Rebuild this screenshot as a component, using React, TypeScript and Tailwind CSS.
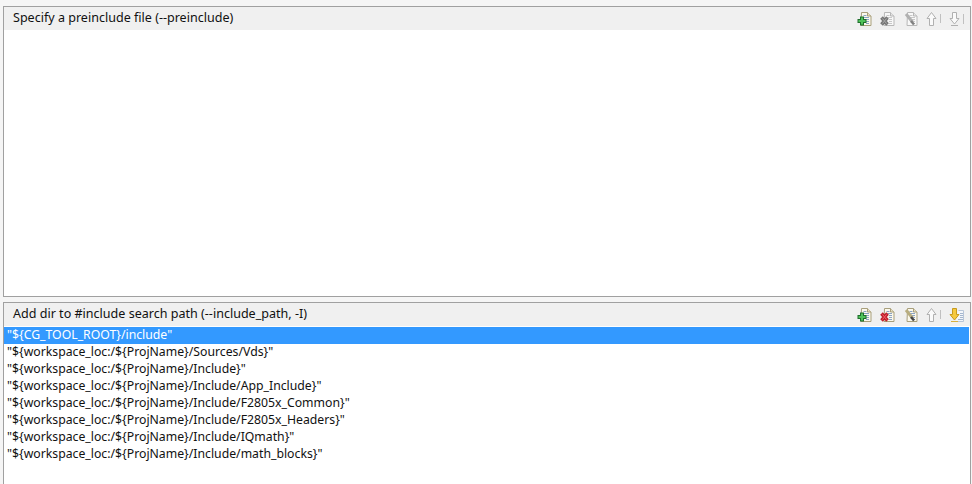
function DocIcon({ variant, on }: { variant: 'add' | 'del' | 'edit'; on: boolean }) {
  const line = on ? '#8ba4c4' : '#c8c8c8';
  const edge = on ? '#a89f7c' : '#b8b8b8';
  return (
    <svg width="16" height="16" viewBox="0 0 16 16" className="shrink-0">
      <path d="M4.500 1.500h6l3.500 3.500v9.500h-10z" fill={on ? '#fbf8ec' : '#f8f8f8'} stroke={edge} />
      <path d="M10.500 1.500v3.500h3.500" fill={on ? '#e8e0c0' : '#e4e4e4'} stroke={edge} />
      <path d="M6.500 4.500h3M6.500 6.500h5.500M9 8.500h3M9 10.500h3M9 12.500h3" stroke={line} />
      {variant === 'add' && (
        <>
          <path d="M5 5.500v9M.5 10h9" stroke="#1f6e2c" strokeWidth="4" />
          <path d="M5 6.500v7M1.500 10h7" stroke="#4fc25a" strokeWidth="2" />
        </>
      )}
      {variant === 'del' && (
        <>
          <path d="M1.500 6.500l6 7M7.500 6.500l-6 7" stroke={on ? '#c0202c' : '#777'} strokeWidth="3.500" />
          <path d="M2.500 7.500l4 5M6.500 7.500l-4 5" stroke={on ? '#f4606a' : '#aaa'} strokeWidth="1" />
        </>
      )}
      {variant === 'edit' && (
        <>
          <path d="M3 3l6.500 8" stroke={on ? '#b8ad80' : '#b0b0b0'} strokeWidth="3" />
          <path d="M8 10l3 3.500" stroke={on ? '#444' : '#808080'} strokeWidth="2.500" />
        </>
      )}
    </svg>
  );
}

function UpIcon() {
  return (
    <svg width="16" height="16" viewBox="0 0 16 16" className="shrink-0">
      <path d="M5.500 1.500l4.500 6h-2.500v7h-4v-7h-2.500z" fill="#fafafa" stroke="#b0b0b0" />
      <path d="M14.500 3v9" stroke="#c0c0c0" />
    </svg>
  );
}

function DownIcon({ on }: { on: boolean }) {
  return (
    <svg width="16" height="16" viewBox="0 0 16 16" className="shrink-0">
      {on ? (
        <>
          <path d="M9.500 3.500h5v11h-8" fill="#f4f6fa" stroke="#b9c6d8" />
          <path d="M11 6.500h3M11 8.500h3M11 10.500h3M9 12.500h5" stroke="#a4b6ce" />
        </>
      ) : (
        <path d="M14.500 3v10" stroke="#c0c0c0" />
      )}
      <path
        d="M3.500 1.500h4v6h2.500l-4.500 5.500-4.500-5.500h2.500z"
        fill={on ? '#f6c93e' : '#fafafa'}
        stroke={on ? '#c79a1e' : '#b0b0b0'}
      />
      <path d="M2 14.500h7" stroke={on ? '#d8b040' : '#b0b0b0'} />
    </svg>
  );
}

function Header({ title, enabled }: { title: string; enabled: boolean }) {
  return (
    <div className="flex h-[23px] items-center justify-between bg-[#f0f0f0] pl-[9px] pr-[5px]">
      <span className="text-[12.55px]">{title}</span>
      <div className="flex items-center gap-[7px]">
        <DocIcon variant="add" on />
        <DocIcon variant="del" on={enabled} />
        <DocIcon variant="edit" on={enabled} />
        <UpIcon />
        <DownIcon on={enabled} />
      </div>
    </div>
  );
}

const paths = [
  '"${CG_TOOL_ROOT}/include"',
  '"${workspace_loc:/${ProjName}/Sources/Vds}"',
  '"${workspace_loc:/${ProjName}/Include}"',
  '"${workspace_loc:/${ProjName}/Include/App_Include}"',
  '"${workspace_loc:/${ProjName}/Include/F2805x_Common}"',
  '"${workspace_loc:/${ProjName}/Include/F2805x_Headers}"',
  '"${workspace_loc:/${ProjName}/Include/IQmath}"',
  '"${workspace_loc:/${ProjName}/Include/math_blocks}"',
];

export default function App() {
  return (
    <div className="flex h-[484px] w-[972px] flex-col gap-[5px] overflow-hidden bg-[#f5f5f5] pl-[3px] pr-px pt-[6px] font-['Noto_Sans',sans-serif] text-[12px] text-[#111]">
      {/* preinclude */}
      <section className="h-[291px] border border-[#a0a0a0] bg-white">
        <Header title="Specify a preinclude file (--preinclude)" enabled={false} />
      </section>

      {/* include paths */}
      <section className="flex-1 border border-b-0 border-[#a0a0a0] bg-white">
        <Header title="Add dir to #include search path (--include_path, -I)" enabled />
        <ul className="mt-px">
          {paths.map((p, i) => (
            <li
              key={p}
              className={`h-[17px] pl-[3px] text-[12.25px] leading-[16px] ${i === 0 ? 'mr-px bg-[#3399ff] text-white' : ''}`}
            >
              {p}
            </li>
          ))}
        </ul>
      </section>
    </div>
  );
}
